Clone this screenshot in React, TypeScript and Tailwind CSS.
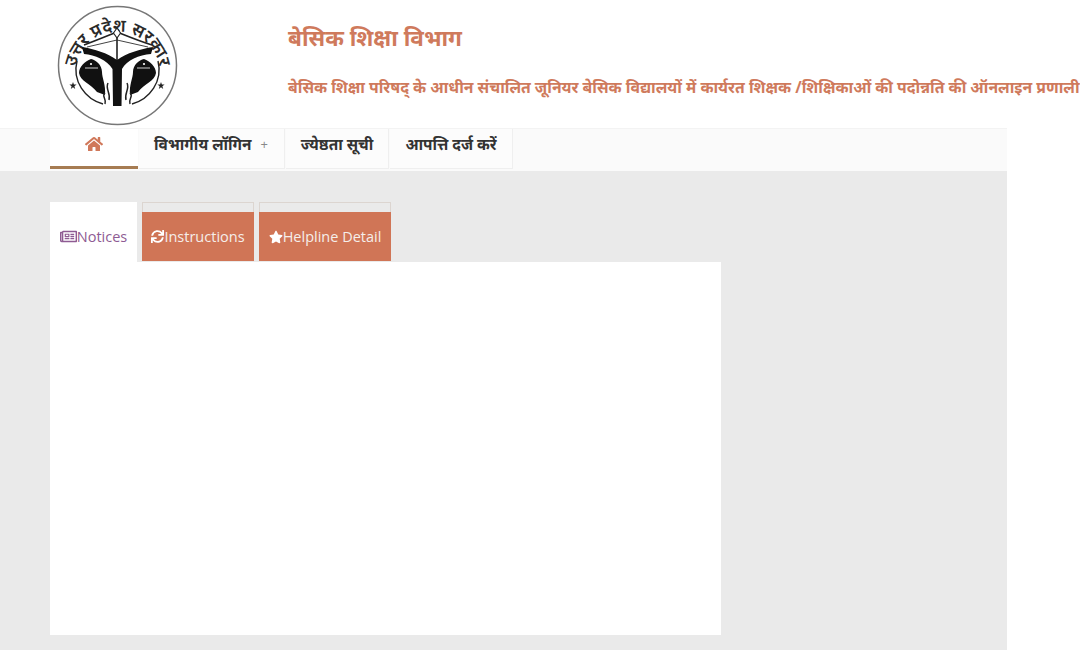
import { FaHome, FaRegNewspaper, FaStar, FaSync } from "react-icons/fa";

const Logo = () => (
  <svg width="124" height="124" viewBox="0 0 124 124" className="shrink-0">
    <circle cx="62.5" cy="62.5" r="59" fill="#fff" stroke="#777" strokeWidth="1.5" />
    <defs>
      <path id="seal-arc" d="M 20 72 A 42 43 0 1 1 105 72" />
    </defs>
    <text fontSize="17.5" fontWeight="600" fill="#2a2a2a" fontFamily="'Noto Sans', sans-serif">
      <textPath href="#seal-arc" startOffset="50%" textAnchor="middle">
        उत्तर प्रदेश सरकार
      </textPath>
    </text>
    {/* bow and arrow */}
    <path d="M29 42 C40 38 52 33 62 29 C72 33 84 38 97 42" fill="none" stroke="#222" strokeWidth="1.6" />
    <path d="M32 44 L62 37 L93 44" fill="none" stroke="#444" strokeWidth="1" />
    <path d="M62 27 L62 58" stroke="#222" strokeWidth="1.6" />
    <path d="M62 25 L65.5 30 L62 35 L58.5 30 Z" fill="#fff" stroke="#222" strokeWidth="1.1" />
    {/* pillar and arms */}
    <path d="M27 44 C40 46 52 50 62 57 C72 50 85 46 98 44 L96 51 C84 52 72 57 67 66 L66.5 103 L58 103 L57.5 66 C52 57 40 52 29 51 Z" fill="#111" />
    {/* ring */}
    <path d="M22 58 C17 78 30 96 48 101 M103 58 C108 78 95 96 77 101" fill="none" stroke="#222" strokeWidth="1.4" />
    {/* fish */}
    <path d="M36 56 C30 58 24 64 24 70 C25 78 36 81 42 89 L50 92 C51 82 47 75 47 69 C47 62 41 57 36 56 Z" fill="#111" />
    <path d="M89 56 C95 58 101 64 101 70 C100 78 89 81 83 89 L75 92 C74 82 78 75 78 69 C78 62 84 57 89 56 Z" fill="#111" />
    <path d="M30 65 L43 65 M82 65 L95 65" stroke="#fff" strokeWidth="0.8" />
    <circle cx="36" cy="61" r="1.1" fill="#fff" />
    <circle cx="89" cy="61" r="1.1" fill="#fff" />
    <path d="M50 90 C46 93 52 96 50 101 M53 80 C50 86 56 90 54 97 M75 90 C79 93 73 96 75 101 M72 80 C75 86 69 90 71 97" fill="none" stroke="#222" strokeWidth="1.5" />
    <path d="M18 79 l0.9 2.6 2.7 0 -2.2 1.6 0.8 2.7 -2.2 -1.6 -2.2 1.6 0.8 -2.7 -2.2 -1.6 2.7 0 Z" fill="#222" />
    <path d="M106 79 l0.9 2.6 2.7 0 -2.2 1.6 0.8 2.7 -2.2 -1.6 -2.2 1.6 0.8 -2.7 -2.2 -1.6 2.7 0 Z" fill="#222" />
  </svg>
);

const navItemClass =
  "flex h-[40px] items-center border-r border-b border-[#efefef] bg-[#fcfcfc] text-[15.4px] font-bold text-[#333] pb-[7px]";

export default function App() {
  return (
    <div className="h-[650px] w-[1080px] overflow-hidden bg-white font-['Open_Sans','Noto_Sans','Noto_Sans_Devanagari',sans-serif]">
      {/* Header */}
      <header className="flex h-[128px] pl-[55px] pt-[3px]">
        <Logo />
        <div className="ml-[109px] whitespace-nowrap text-[#cf7a5c]">
          <h1 className="mt-[20px] text-[22.5px] leading-[30px] font-bold">बेसिक शिक्षा विभाग</h1>
          <p className="mt-[22px] text-[15.75px] leading-[24px] font-bold">
            बेसिक शिक्षा परिषद् के आधीन संचालित जूनियर बेसिक विद्यालयों में कार्यरत शिक्षक /शिक्षिकाओं की पदोन्नति की ऑनलाइन प्रणाली
          </p>
        </div>
      </header>

      <div className="w-[1007px]">
        {/* Nav */}
        <nav className="flex h-[43px] border-t border-[#f3f3f3] bg-[#fafafa] pl-[50px]">
          <div className="flex h-[40px] w-[88px] items-start justify-center border-b-[3px] border-[#a67c52] bg-white pt-[6px]">
            <FaHome size={18} color="#d0785a" />
          </div>
          <div className={`${navItemClass} ml-px w-[146px] gap-[9px] pl-[15px]`}>
            <span>विभागीय लॉगिन</span>
            <span className="text-[13px] font-normal text-[#888]">+</span>
          </div>
          <div className={`${navItemClass} ml-px w-[103px] justify-center`}>ज्येष्ठता सूची</div>
          <div className={`${navItemClass} ml-px w-[123px] justify-center`}>आपत्ति दर्ज करें</div>
        </nav>

        {/* Body */}
        <main className="h-[479px] bg-[#eaeaea] pl-[50px] pt-[31px]">
          <div className="flex items-end gap-[5px]">
            <div className="flex h-[60px] w-[87px] items-center justify-center gap-0 bg-white pt-[9px] text-[14.5px] text-[#8e5b93]">
              <FaRegNewspaper size={17} />
              <span>Notices</span>
            </div>
            <div className="h-[60px] w-[112px]">
              <div className="h-[10px] border-x border-t border-[#dcd5d0]" />
              <div className="flex h-[49px] items-center justify-center gap-0 bg-[#d07556] text-[14.5px] text-[#f5eeea]">
                <FaSync size={13} color="#fff" />
                <span>Instructions</span>
              </div>
            </div>
            <div className="h-[60px] w-[132px]">
              <div className="h-[10px] border-x border-t border-[#dcd5d0]" />
              <div className="flex h-[49px] items-center justify-center gap-0 bg-[#d07556] text-[14.5px] text-[#f5eeea]">
                <FaStar size={14} color="#fff" />
                <span>Helpline Detail</span>
              </div>
            </div>
          </div>
          <div className="h-[373px] w-[671px] bg-white" />
        </main>
      </div>
    </div>
  );
}
